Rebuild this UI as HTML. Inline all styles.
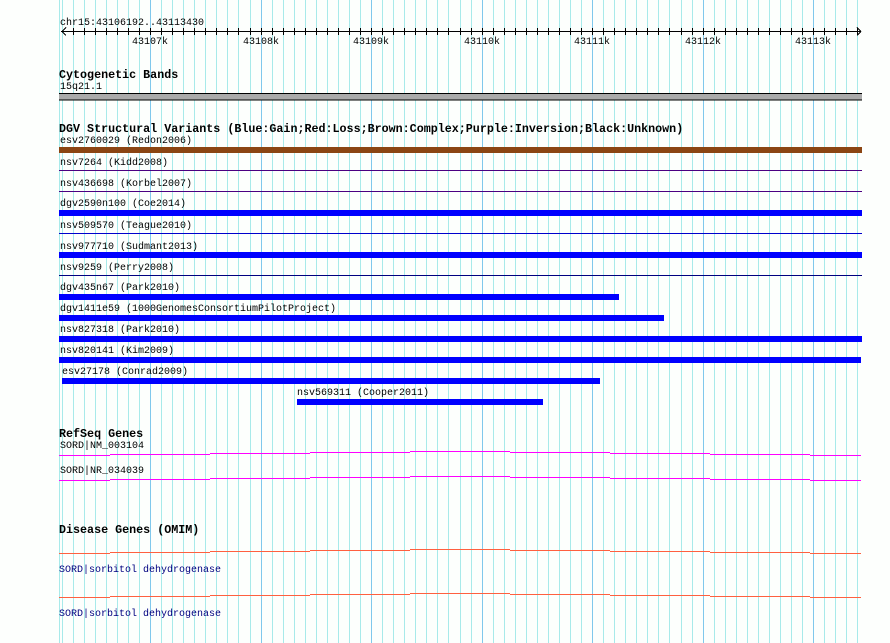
<!DOCTYPE html>
<html><head><meta charset="utf-8"><style>
html,body{margin:0;padding:0;background:#fff;}
svg{display:block}
text{font-family:"Liberation Mono","DejaVu Sans Mono",monospace;font-size:10px;fill:#000}
.b{font-weight:bold;font-size:11.7px}
.d{fill:#000080}
</style></head><body>
<svg width="890" height="643" viewBox="0 0 890 643" xmlns="http://www.w3.org/2000/svg" shape-rendering="crispEdges">
<rect width="890" height="643" fill="#fdfffd"/>
<path stroke="#a8eaea" stroke-width="1" fill="none" d="M59.5 0V643M62.5 0V643M73.5 0V643M84.5 0V643M95.5 0V643M106.5 0V643M117.5 0V643M128.5 0V643M139.5 0V643M161.5 0V643M172.5 0V643M183.5 0V643M194.5 0V643M205.5 0V643M216.5 0V643M227.5 0V643M238.5 0V643M250.5 0V643M272.5 0V643M283.5 0V643M294.5 0V643M305.5 0V643M316.5 0V643M327.5 0V643M338.5 0V643M349.5 0V643M360.5 0V643M382.5 0V643M393.5 0V643M404.5 0V643M415.5 0V643M426.5 0V643M437.5 0V643M448.5 0V643M460.5 0V643M471.5 0V643M493.5 0V643M504.5 0V643M515.5 0V643M526.5 0V643M537.5 0V643M548.5 0V643M559.5 0V643M570.5 0V643M581.5 0V643M603.5 0V643M614.5 0V643M625.5 0V643M636.5 0V643M647.5 0V643M658.5 0V643M669.5 0V643M681.5 0V643M692.5 0V643M714.5 0V643M725.5 0V643M736.5 0V643M747.5 0V643M758.5 0V643M769.5 0V643M780.5 0V643M791.5 0V643M802.5 0V643M824.5 0V643M835.5 0V643M846.5 0V643M857.5 0V643"/>
<path stroke="#80c8ec" stroke-width="1" fill="none" d="M150.5 0V643M261.5 0V643M371.5 0V643M482.5 0V643M592.5 0V643M703.5 0V643M813.5 0V643"/>

<text x="60" y="25">chr15:43106192..43113430</text>
<path stroke="#000" fill="none" d="M61 31.5H861M62 31.5l4-4M62 31.5l4 4M861 31.5l-4-4M861 31.5l-4 4"/>
<path stroke="#000" fill="none" d="M73.5 28V35M84.5 28V35M95.5 28V35M106.5 28V35M117.5 28V35M128.5 28V35M139.5 28V35M150.5 28V35M161.5 28V35M172.5 28V35M183.5 28V35M194.5 28V35M205.5 28V35M216.5 28V35M227.5 28V35M238.5 28V35M250.5 28V35M261.5 28V35M272.5 28V35M283.5 28V35M294.5 28V35M305.5 28V35M316.5 28V35M327.5 28V35M338.5 28V35M349.5 28V35M360.5 28V35M371.5 28V35M382.5 28V35M393.5 28V35M404.5 28V35M415.5 28V35M426.5 28V35M437.5 28V35M448.5 28V35M460.5 28V35M471.5 28V35M482.5 28V35M493.5 28V35M504.5 28V35M515.5 28V35M526.5 28V35M537.5 28V35M548.5 28V35M559.5 28V35M570.5 28V35M581.5 28V35M592.5 28V35M603.5 28V35M614.5 28V35M625.5 28V35M636.5 28V35M647.5 28V35M658.5 28V35M669.5 28V35M681.5 28V35M692.5 28V35M703.5 28V35M714.5 28V35M725.5 28V35M736.5 28V35M747.5 28V35M758.5 28V35M769.5 28V35M780.5 28V35M791.5 28V35M802.5 28V35M813.5 28V35M824.5 28V35M835.5 28V35M846.5 28V35M857.5 28V35"/>
<g text-anchor="middle">
<text x="150" y="44">43107k</text><text x="261" y="44">43108k</text><text x="371" y="44">43109k</text><text x="482" y="44">43110k</text><text x="592" y="44">43111k</text><text x="703" y="44">43112k</text><text x="813" y="44">43113k</text>
</g>

<text class="b" x="59" y="78">Cytogenetic Bands</text>
<text x="60" y="89">15q21.1</text>
<rect x="59" y="93" width="803" height="7" fill="#aaa"/>
<rect x="59" y="93" width="803" height="1" fill="#000"/>
<rect x="59" y="99.5" width="803" height="1" fill="#000"/>

<text class="b" x="59" y="132">DGV Structural Variants (Blue:Gain;Red:Loss;Brown:Complex;Purple:Inversion;Black:Unknown)</text>
<text x="60" y="143">esv2760029 (Redon2006)</text>
<rect x="59" y="147" width="803" height="6" fill="#8b4513"/>
<text x="60" y="165">nsv7264 (Kidd2008)</text>
<rect x="59" y="170" width="803" height="1" fill="#4b0082"/>
<text x="60" y="186">nsv436698 (Korbel2007)</text>
<rect x="59" y="191" width="803" height="1" fill="#4b0082"/>
<text x="60" y="206">dgv2590n100 (Coe2014)</text>
<rect x="59" y="210" width="803" height="6" fill="#0000ff"/>
<text x="60" y="228">nsv509570 (Teague2010)</text>
<rect x="59" y="233" width="803" height="1" fill="#0000cc"/>
<text x="60" y="249">nsv977710 (Sudmant2013)</text>
<rect x="59" y="252" width="803" height="6" fill="#0000ff"/>
<text x="60" y="270">nsv9259 (Perry2008)</text>
<rect x="59" y="275" width="803" height="1" fill="#000080"/>
<text x="60" y="290">dgv435n67 (Park2010)</text>
<rect x="59" y="294" width="560" height="6" fill="#0000ff"/>
<text x="60" y="311">dgv1411e59 (1000GenomesConsortiumPilotProject)</text>
<rect x="59" y="315" width="605" height="6" fill="#0000ff"/>
<text x="60" y="332">nsv827318 (Park2010)</text>
<rect x="59" y="336" width="803" height="6" fill="#0000ff"/>
<text x="60" y="353">nsv820141 (Kim2009)</text>
<rect x="59" y="357" width="802" height="6" fill="#0000ff"/>
<text x="62" y="374">esv27178 (Conrad2009)</text>
<rect x="62" y="378" width="538" height="6" fill="#0000ff"/>
<text x="297" y="395">nsv569311 (Cooper2011)</text>
<rect x="297" y="399" width="246" height="6" fill="#0000ff"/>

<text class="b" x="59" y="437">RefSeq Genes</text>
<text x="60" y="448">SORD|NM_003104</text>
<path fill="none" stroke="#ff00ff" d="M59 455.5H110M110 454.5H210M210 453.5H310M310 452.5H410M410 451.5H510M510 452.5H610M610 453.5H710M710 454.5H810M810 455.5H861"/>
<text x="60" y="473">SORD|NR_034039</text>
<path fill="none" stroke="#ff00ff" d="M59 480.5H110M110 479.5H210M210 478.5H310M310 477.5H410M410 476.5H510M510 477.5H610M610 478.5H710M710 479.5H810M810 480.5H861"/>

<text class="b" x="59" y="533">Disease Genes (OMIM)</text>
<path fill="none" stroke="#ff6040" d="M59 553.5H110M110 552.5H210M210 551.5H310M310 550.5H410M410 549.5H510M510 550.5H610M610 551.5H710M710 552.5H810M810 553.5H861"/>
<text class="d" x="59" y="572">SORD|sorbitol dehydrogenase</text>
<path fill="none" stroke="#ff6040" d="M59 597.5H110M110 596.5H210M210 595.5H310M310 594.5H410M410 593.5H510M510 594.5H610M610 595.5H710M710 596.5H810M810 597.5H861"/>
<text class="d" x="59" y="616">SORD|sorbitol dehydrogenase</text>
</svg>
</body></html>
